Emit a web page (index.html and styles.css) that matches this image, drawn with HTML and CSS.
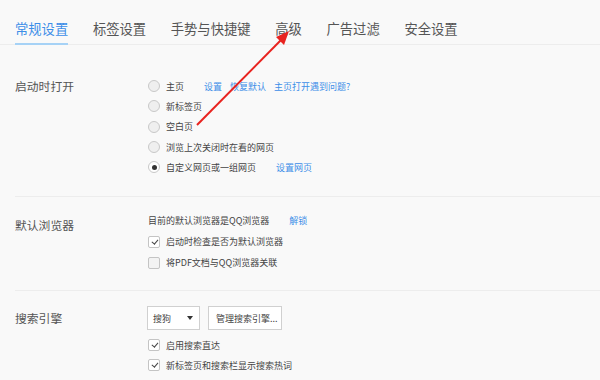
FILE: index.html
```html
<!doctype html>
<html>
	<head>
		<meta http-equiv="Content-Type" content="text/html; charset=utf-8" />
		<title>设置</title>
		<link rel="stylesheet" href="styles.css">
	</head>
	<body>
		<div class="tabs">
			<span class="tab tab_active">常规设置</span>
			<span class="tab">标签设置</span>
			<span class="tab">手势与快捷键</span>
			<span class="tab">高级</span>
			<span class="tab">广告过滤</span>
			<span class="tab">安全设置</span>
		</div>
		<section class="group group_start">
			<h3 class="group_title">启动时打开</h3>
			<div class="group_body">
				<div class="row"><span class="radio"></span>主页<a class="link link_first">设置</a><a class="link">恢复默认</a><a class="link">主页打开遇到问题?</a></div>
				<div class="row"><span class="radio"></span>新标签页</div>
				<div class="row"><span class="radio"></span>空白页</div>
				<div class="row"><span class="radio"></span>浏览上次关闭时在看的网页</div>
				<div class="row"><span class="radio radio_on"></span>自定义网页或一组网页<a class="link link_first">设置网页</a></div>
			</div>
		</section>
		<section class="group group_default">
			<h3 class="group_title">默认浏览器</h3>
			<div class="group_body">
				<div class="row">目前的默认浏览器是QQ浏览器<a class="link link_first">解锁</a></div>
				<div class="row"><span class="check check_on"></span>启动时检查是否为默认浏览器</div>
				<div class="row"><span class="check"></span>将PDF文档与QQ浏览器关联</div>
			</div>
		</section>
		<section class="group group_search">
			<h3 class="group_title">搜索引擎</h3>
			<div class="group_body">
				<div class="controls">
					<span class="select">搜狗<span class="caret"></span></span>
					<span class="button">管理搜索引擎...</span>
				</div>
				<div class="row"><span class="check check_on"></span>启用搜索直达</div>
				<div class="row"><span class="check check_on"></span>新标签页和搜索栏显示搜索热词</div>
			</div>
		</section>
		<svg class="arrow" width="600" height="380" viewBox="0 0 600 380">
			<line x1="197" y1="125" x2="282" y2="39" stroke="#e8231f" stroke-width="2" />
			<polygon points="289,31 276,37 284,45" fill="#e8231f" />
		</svg>
	</body>
</html>
```
FILE: styles.css
```css
body {
	margin : 0;
	background-color : #f9f9f9;
	font-family : "Noto Sans CJK SC", "Liberation Sans", sans-serif;
	color : #444;
	position : relative;
	width : 600px;
	height : 380px;
	overflow : hidden;
}
.tabs {
	display : flex;
	gap : 24.7px;
	height : 45px;
	padding : 0 15px;
	box-sizing : border-box;
	border-bottom : 1px solid #ededed;
}
.tab {
	display : block;
	height : 45px;
	box-sizing : border-box;
	padding-top : 19px;
	line-height : 20px;
	font-size : 13.3px;
	color : #555;
}
.tab_active {
	color : #3d8ee8;
	border-bottom : 2px solid #a6d2f6;
}
.group {
	display : grid;
	grid-template-columns : 133px 1fr;
	margin-left : 15px;
	border-bottom : 1px solid #ededed;
}
.group_title {
	margin : 0;
	font-size : 11.8px;
	font-weight : normal;
	line-height : 20px;
	color : #555;
}
.group_start {
	padding : 31px 0 19px;
}
.group_start .row {
	height : 20.3px;
}
.group_default {
	padding : 13px 0 17px;
}
.group_default .group_title {
	padding-top : 5px;
}
.group_default .row {
	height : 21px;
}
.group_search {
	padding : 15px 0 0;
	border-bottom : none;
}
.group_search .group_title {
	padding-top : 2px;
}
.group_search .row {
	height : 20px;
}
.row {
	display : flex;
	align-items : center;
	font-size : 9px;
	color : #444;
	white-space : nowrap;
}
.link {
	color : #3d8ee8;
	margin-left : 8px;
}
.link_first {
	margin-left : 20px;
}
.radio {
	width : 10px;
	height : 10px;
	border : 1px solid #c8c8c8;
	border-radius : 50%;
	background-color : #efefef;
	margin-right : 6px;
	position : relative;
}
.radio_on {
	background-color : #fff;
}
.radio_on::after {
	content : "";
	position : absolute;
	left : 2.5px;
	top : 2.5px;
	width : 5px;
	height : 5px;
	border-radius : 50%;
	background-color : #333;
}
.check {
	width : 10px;
	height : 10px;
	border : 1px solid #c4c4c4;
	border-radius : 2px;
	background-color : #f3f3f3;
	margin-right : 6px;
	position : relative;
}
.check_on {
	background-color : #fff;
}
.check_on::after {
	content : "";
	position : absolute;
	left : 3.5px;
	top : 1px;
	width : 2.5px;
	height : 5px;
	border-right : 1.3px solid #444;
	border-bottom : 1.3px solid #444;
	transform : rotate(40deg);
}
.controls {
	display : flex;
	gap : 8px;
	margin-left : -1px;
	margin-bottom : 5px;
}
.select {
	display : flex;
	align-items : center;
	justify-content : space-between;
	width : 53px;
	height : 24px;
	box-sizing : border-box;
	padding : 0 6px 0 5px;
	border : 1px solid #d0d0d0;
	background-color : #fff;
	font-size : 9px;
	color : #444;
}
.caret {
	width : 0;
	height : 0;
	border-left : 3px solid transparent;
	border-right : 3px solid transparent;
	border-top : 4px solid #333;
}
.button {
	display : flex;
	align-items : center;
	width : 74px;
	height : 24px;
	box-sizing : border-box;
	padding-left : 7px;
	border : 1px solid #d0d0d0;
	background-color : #fff;
	font-size : 9px;
	color : #444;
}
.arrow {
	position : absolute;
	left : 0;
	top : 0;
	pointer-events : none;
}
```
